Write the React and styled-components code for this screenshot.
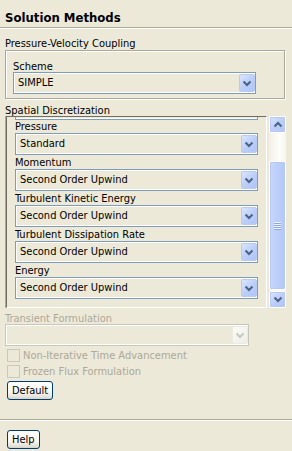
import React from "react";
import styled, { createGlobalStyle } from "styled-components";

const Global = createGlobalStyle`
  html, body { margin: 0; padding: 0; background: #ece9d8; }
  body { font-family: "DejaVu Sans Condensed", "DejaVu Sans", "Liberation Sans", sans-serif; font-size: 11px; color: #000; }
  * { box-sizing: border-box; }
`;

const Root = styled.div`
  width: 292px;
  height: 451px;
  display: flex;
  flex-direction: column;
  background: #ece9d8;
  overflow: hidden;
`;

const Header = styled.div`
  padding: 10px 5px 1px;
`;

const Title = styled.div`
  font-size: 13px;
  font-weight: bold;
  line-height: 16px;
`;

const Rule = styled.div`
  height: 2px;
  border-top: 1px solid #aca899;
  border-bottom: 1px solid #fff;
  flex-shrink: 0;
`;

const Body = styled.div`
  flex: 1;
  display: flex;
  flex-direction: column;
  align-items: flex-start;
  padding-left: 5px;
`;

const SectionLabel = styled.div`
  line-height: 13px;
  height: ${(p) => p.$h || 13}px;
  margin-top: ${(p) => p.$mt || 0}px;
  color: ${(p) => (p.$disabled ? "#aca899" : "#000")};
  white-space: nowrap;
`;

const GroupBox = styled.div`
  width: 280px;
  border: 1px solid #aca899;
  box-shadow: inset 1px 1px 0 #fff, 1px 1px 0 #fff;
  padding: 9px 7px 4px;
`;

const FieldLabel = styled.div`
  height: ${(p) => p.$h || 13}px;
  line-height: 13px;
  white-space: nowrap;
`;

const ComboBox = styled.div`
  display: flex;
  width: ${(p) => p.$w}px;
  height: 22px;
  border: 1px solid ${(p) => (p.$disabled ? "#c9c7ba" : "#7f9db9")};
  background: #ece9d8;
  box-shadow: inset 0 0 0 1px #fff;
  padding: 1px 0 1px 1px;
  margin-bottom: ${(p) => p.$mb || 0}px;
`;

const ComboText = styled.div`
  flex: 1;
  padding-left: 3px;
  line-height: 18px;
  white-space: nowrap;
  overflow: hidden;
`;

const ComboButton = styled.div`
  width: 16px;
  height: 18px;
  border-radius: 2px;
  display: flex;
  align-items: center;
  justify-content: center;
  border: 1px solid ${(p) => (p.$disabled ? "#eceae2" : "#b9cbf5")};
  background: ${(p) =>
    p.$disabled
      ? "linear-gradient(135deg, #fbfbf9, #eeede6)"
      : "linear-gradient(135deg, #dbe5fd, #bccff9 50%, #b0c5f7)"};
`;

const Chevron = ({ up, color }) => (
  <svg width="10" height="7" viewBox="0 0 10 7">
    <polyline
      points={up ? "1.5,5.5 5,2 8.5,5.5" : "1.5,1.5 5,5 8.5,1.5"}
      fill="none"
      stroke={color}
      strokeWidth="2"
    />
  </svg>
);

const Combo = ({ value, width, disabled, mb }) => (
  <ComboBox $w={width} $disabled={disabled} $mb={mb}>
    <ComboText>{value}</ComboText>
    <ComboButton $disabled={disabled}>
      <Chevron color={disabled ? "#c9c7ba" : "#4d6185"} />
    </ComboButton>
  </ComboBox>
);

const ScrollFrame = styled.div`
  display: flex;
  gap: 2px;
  margin-left: 1px;
  height: 192px;
`;

const Viewport = styled.div`
  width: 261px;
  height: 192px;
  border-style: solid;
  border-width: 1px;
  border-color: #716f64 #fff #fff #716f64;
  box-shadow: -1px 0 0 #aca899;
  overflow: hidden;
  padding-left: 8px;
`;

const CutCombo = styled.div`
  width: 243px;
  height: 3px;
  border: 1px solid #7f9db9;
  border-top: none;
  box-shadow: inset 0 -1px 0 #fff;
`;

const ScrollBar = styled.div`
  width: 17px;
  display: flex;
  flex-direction: column;
  background: linear-gradient(to right, #f1efe6, #fdfdfa 60%, #f5f4ef);
`;

const ScrollBtn = styled.div`
  width: 17px;
  height: 17px;
  flex-shrink: 0;
  border: 1px solid #fff;
  border-radius: 2px;
  box-shadow: inset 0 0 0 1px #b7c9f3;
  background: linear-gradient(135deg, #dbe5fd, #bccff9 50%, #afc4f6);
  display: flex;
  align-items: center;
  justify-content: center;
`;

const Track = styled.div`
  flex: 1;
  display: flex;
  flex-direction: column;
  padding-top: 28px;
`;

const Thumb = styled.div`
  height: 129px;
  border: 1px solid #fff;
  border-radius: 2px;
  box-shadow: inset 0 0 0 1px #b7c9f3;
  background: linear-gradient(to right, #c9d8fc, #bccff9 50%, #b3c8f8);
  display: flex;
  align-items: center;
  justify-content: center;
`;

const Grip = styled.div`
  width: 7px;
  height: 8px;
  background: repeating-linear-gradient(
    to bottom,
    #eef3fe 0px,
    #eef3fe 1px,
    #8ca6e8 1px,
    #8ca6e8 2px
  );
`;

const CheckRow = styled.div`
  display: flex;
  align-items: center;
  gap: 3px;
  height: 16px;
  margin-left: 2px;
  margin-top: ${(p) => p.$mt || 0}px;
  color: #aca899;
  white-space: nowrap;
`;

const CheckBox = styled.div`
  width: 13px;
  height: 13px;
  border: 1px solid #cac8bb;
  background: #ece9d8;
`;

const XPButton = styled.div`
  height: 19px;
  padding: 0 4px;
  border: 1px solid #003c74;
  border-radius: 3px;
  background: linear-gradient(to bottom, #ffffff, #f6f5f1 60%, #e3e0d6 90%, #d6d0c5);
  line-height: 17px;
  margin-left: ${(p) => p.$ml ?? 2}px;
  margin-top: ${(p) => p.$mt || 0}px;
  white-space: nowrap;
`;

const Footer = styled.div`
  padding: 9px 7px 2px;
  height: 30px;
  display: flex;
`;

const fields = [
  { label: "Pressure", value: "Standard" },
  { label: "Momentum", value: "Second Order Upwind" },
  { label: "Turbulent Kinetic Energy", value: "Second Order Upwind" },
  { label: "Turbulent Dissipation Rate", value: "Second Order Upwind" },
  { label: "Energy", value: "Second Order Upwind" },
];

export default function App() {
  return (
    <Root>
      <Global />
      <Header>
        <Title>Solution Methods</Title>
      </Header>
      <Rule />
      <Body>
        <SectionLabel $mt={8}>Pressure-Velocity Coupling</SectionLabel>
        <GroupBox>
          <FieldLabel $h={12}>Scheme</FieldLabel>
          <Combo value="SIMPLE" width={243} />
        </GroupBox>
        <SectionLabel $mt={5} $h={12}>Spatial Discretization</SectionLabel>
        <ScrollFrame>
          <Viewport>
            <CutCombo />
            {fields.map((f) => (
              <React.Fragment key={f.label}>
                <FieldLabel>{f.label}</FieldLabel>
                <Combo value={f.value} width={243} mb={1} />
              </React.Fragment>
            ))}
          </Viewport>
          <ScrollBar>
            <ScrollBtn>
              <Chevron up color="#4d6185" />
            </ScrollBtn>
            <Track>
              <Thumb>
                <Grip />
              </Thumb>
            </Track>
            <ScrollBtn>
              <Chevron color="#4d6185" />
            </ScrollBtn>
          </ScrollBar>
        </ScrollFrame>
        <SectionLabel $mt={4} $h={12} $disabled>
          Transient Formulation
        </SectionLabel>
        <Combo value="" width={244} disabled />
        <CheckRow $mt={1}>
          <CheckBox />
          Non-Iterative Time Advancement
        </CheckRow>
        <CheckRow>
          <CheckBox />
          Frozen Flux Formulation
        </CheckRow>
        <XPButton $mt={2}>Default</XPButton>
      </Body>
      <Rule />
      <Footer>
        <XPButton $ml={0}>Help</XPButton>
      </Footer>
    </Root>
  );
}
